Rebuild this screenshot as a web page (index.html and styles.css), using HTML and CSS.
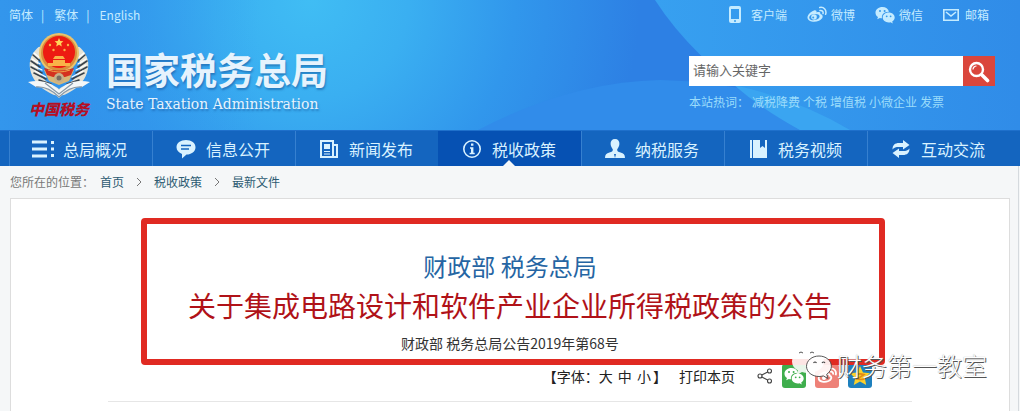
FILE: index.html
```
<!DOCTYPE html>
<html lang="zh-CN">
<head>
    <meta charset="UTF-8">
    <meta name="viewport" content="width=device-width, initial-scale=1">
    <title>国家税务总局</title>
    <link rel="stylesheet" href="styles.css">
</head>
<body>
<header class="header">
    <svg class="header-bg" viewBox="0 0 1020 130" preserveAspectRatio="none" aria-hidden="true">
        <defs>
            <radialGradient id="glow" gradientUnits="userSpaceOnUse" cx="310" cy="0" r="330">
                <stop offset="0" stop-color="#40bdf4"/>
                <stop offset=".3" stop-color="#3aaff1"/>
                <stop offset=".62" stop-color="#3197ec"/>
                <stop offset="1" stop-color="#2d80e4"/>
            </radialGradient>
            <linearGradient id="left" x1="0" x2="1" y1="0" y2="0">
                <stop offset="0" stop-color="#3396ec"/>
                <stop offset="1" stop-color="#3396ec" stop-opacity="0"/>
            </linearGradient>
            <linearGradient id="right" x1="0" x2="1" y1="0" y2="0">
                <stop offset="0" stop-color="#37a0f0"/>
                <stop offset="1" stop-color="#308ce8"/>
            </linearGradient>
        </defs>
        <rect width="1020" height="130" fill="url(#glow)"/>
        <rect width="260" height="130" fill="url(#left)"/>
        <path d="M478 130Q570 82 660 80Q770 82 850 130Z" fill="#318cea"/>
        <path d="M655 0Q700 70 800 130H1020V0Z" fill="url(#right)"/>
        <path d="M734 85Q800 100 850 130H800Q760 108 734 85Z" fill="#3aa5f1"/>
    </svg>
    <div class="top">
        <div class="lang">
            <a href="#">简体</a><i>|</i><a href="#">繁体</a><i>|</i><a href="#">English</a>
        </div>
        <div class="tools">
            <a href="#">
                <svg class="phone" width="12" height="18" viewBox="0 0 12 18"><path fill="currentColor" fill-rule="evenodd" d="M2 0h8a2 2 0 0 1 2 2v13a2 2 0 0 1-2 2H2a2 2 0 0 1-2-2V2a2 2 0 0 1 2-2zm0 3v10h8V3zm3 11.300v1.400h2v-1.400z"/></svg>客户端</a>
            <a href="#">
                <svg width="20" height="18" viewBox="0 0 20 18"><path fill="currentColor" fill-rule="evenodd" d="M7 4.500c1.500-.6 3 .1 2.500 1.900 2-.8 4.400-.6 3.800 1.600 4 1.300 2.600 5-1.300 6.700-4.500 2-11 1-11.500-2.700C.2 9 3.800 5.700 7 4.500zM7.500 8c-3.400.2-5.500 2-5.200 3.900.3 1.700 2.700 2.600 5.500 2.200s5-2 4.800-3.800S10.300 7.800 7.500 8z"/><circle cx="7" cy="11" r="2.800" fill="currentColor"/><circle cx="6.200" cy="11.600" r="1" fill="#37a0ee"/><path d="M13 4.600c2-.5 3.600.9 3 3M12.700 1.500c4.200-.8 7.300 2.600 5.900 6.800" fill="none" stroke="currentColor" stroke-width="1.500" stroke-linecap="round"/></svg>微博</a>
            <a href="#">
                <svg width="20" height="18" viewBox="0 0 20 18"><path fill="currentColor" d="M7.500 1C3.400 1 .5 3.600.5 6.700c0 1.800.9 3.300 2.500 4.300l-.8 2.300 2.700-1.400c.7.2 1.300.3 2.100.3C6.200 8.300 9.800 5.400 14 5.700 13.300 3 10.700 1 7.500 1z"/><path fill="currentColor" d="M13.700 6.600c-3.400 0-6 2.200-6 5s2.600 4.900 6 4.900c.7 0 1.300-.1 1.900-.3l2.200 1.200-.6-1.900c1.500-.9 2.500-2.300 2.500-3.900 0-2.800-2.600-5-6-5z"/><g fill="#3499ea"><circle cx="5" cy="5" r="1"/><circle cx="9.600" cy="5" r="1"/><circle cx="11.700" cy="10.300" r=".9"/><circle cx="15.600" cy="10.300" r=".9"/></g></svg>微信</a>
            <a href="#">
                <svg width="16" height="12" viewBox="0 0 16 12"><path fill="none" stroke="currentColor" stroke-width="1.600" d="M.8.8h14.400v10.400H.8zM3 3l5 4 5-4"/></svg>邮箱</a>
        </div>
    </div>
    <div class="banner">
        <a class="logo" href="#">
            <span class="emblem">
                <svg width="66" height="67" viewBox="0 0 66 67" aria-hidden="true">
                    <g fill="none" stroke-linecap="round">
                        <path d="M14 19C3 30 6 49 29 59M52 19C63 30 60 49 37 59" stroke="#e6e3d6" stroke-width="8"/>
                        <path d="M7 23l7 6M5 29l9 6M5 35l11 6M8 41l12 6M13 48l12 4M59 23l-7 6M61 29l-9 6M61 35l-11 6M58 41l-12 6M53 48l-12 4" stroke="#39424b" stroke-width="1.600"/>
                        <path d="M8 21l6 5M6 27l8 5M6 33l10 5M9 39l11 6M58 21l-6 5M60 27l-8 5M60 33l-10 5M57 39l-11 6" stroke="#fff" stroke-width="1.200"/>
                    </g>
                    <path d="M18 38h30l-5 11-10 4-10-4z" fill="#d8b778"/>
                    <circle cx="33" cy="21" r="20" fill="#ebc36c"/>
                    <circle cx="33" cy="21" r="18" fill="#d98f3d"/>
                    <circle cx="33" cy="20" r="16" fill="#ed1b12"/>
                    <path d="M33 6l1.300 2.900 3.100.3-2.300 2.100.7 3.100-2.800-1.600-2.800 1.600.7-3.100-2.300-2.100 3.100-.3z" fill="#ffd45a"/>
                    <g fill="#f9b348"><circle cx="24" cy="13" r="1.200"/><circle cx="42" cy="13" r="1.200"/><circle cx="27.500" cy="18" r="1.200"/><circle cx="38.500" cy="18" r="1.200"/>
                    <path d="M29 24h8l2 3h-12zM27 28h12v3h5v3H22v-3h5z"/></g>
                    <path d="M18 36q15 5 30 0l-3 7q-12 5-24 0z" fill="#d4301f"/>
                    <path d="M22 38q11 4 22 0" stroke="#f0a64a" fill="none"/>
                    <circle cx="33" cy="46" r="5" fill="#c7b089"/>
                    <circle cx="33" cy="46" r="2.500" fill="#796c61"/>
                    <path d="M2 50q12-3 23 2l8 6 8-6q11-5 23-2l-8 5q-11-1-23 11-12-12-23-11z" fill="#f4f7f8"/>
                    <path d="M10 55q12-1 23 10 11-11 23-10M19 51l14 11 14-11" fill="none" stroke="#8798a7" stroke-width="1.300"/>
                </svg>
                <span class="brush">中国税务</span>
            </span>
            <span class="name">
                <strong>国家税务总局</strong>
                <em>State Taxation Administration</em>
            </span>
        </a>
        <div class="search">
            <form action="#">
                <input type="text" aria-label="关键字" placeholder="请输入关键字">
                <button type="submit" aria-label="搜索">
                    <svg width="22" height="22" viewBox="0 0 22 22"><circle cx="8.500" cy="8.500" r="6.500" fill="none" stroke="#fff" stroke-width="2.400"/><path d="M5 8.500A3.500 3.500 0 0 1 8.500 5" fill="none" stroke="#fff" stroke-width="1.200"/><path d="M14 14l5.500 5.500" stroke="#fff" stroke-width="3.600" stroke-linecap="round"/></svg>
                </button>
            </form>
            <p class="hot"><span>本站热词：</span><a href="#">减税降费</a><a href="#">个税</a><a href="#">增值税</a><a href="#">小微企业</a><a href="#">发票</a></p>
        </div>
    </div>
</header>

<nav class="nav">
    <a href="#"><svg viewBox="0 0 24 20"><path d="M1 3h15M1 10h15M1 17h15" stroke="currentColor" stroke-width="3"/><path d="M20 2h3v3h-3zM20 8.500h3v3h-3zM20 15h3v3h-3z" fill="currentColor"/></svg>总局概况</a>
    <a href="#"><svg viewBox="0 0 24 20"><path d="M12 1c5.500 0 9.500 3 9.500 7.300S17.500 15.500 12.500 15.600L8 19.500v-4.600C4.800 13.800 2.500 11.500 2.500 8.300 2.500 4 6.500 1 12 1z" fill="currentColor"/><path d="M7 6.500h10M7 10h8" stroke="#1465bf" stroke-width="1.400"/></svg>信息公开</a>
    <a href="#"><svg viewBox="0 0 24 20"><path d="M4 2h12v16H4zM16 6h4v12h-5" fill="none" stroke="currentColor" stroke-width="2"/><path d="M7 5h6v5H7zM7 12h6v1H7zM7 14.500h6v1H7z" fill="currentColor"/></svg>新闻发布</a>
    <a href="#" class="on"><svg viewBox="0 0 24 20"><circle cx="12" cy="10" r="8.200" fill="none" stroke="currentColor" stroke-width="1.600"/><path d="M11 4.500h2.400v2.300H11zM10 8.300h3.400v5.500h1.300v1.400H9.600v-1.400H11V9.700h-1z" fill="currentColor"/></svg>税收政策</a>
    <a href="#"><svg viewBox="0 0 24 20"><path d="M12 0c3 0 4.600 2 4.400 5-.2 2.500-1.300 4-2.200 5.200-.3 2 1 2.600 3.400 3.300 3 .9 4.400 2.200 4.400 5.500H2c0-3.300 1.400-4.600 4.400-5.500 2.400-.7 3.700-1.300 3.400-3.300C8.900 9 7.800 7.500 7.600 5 7.400 2 9 0 12 0z" fill="currentColor"/><path d="M11 15l1 4 1-4" fill="#1465bf"/></svg>纳税服务</a>
    <a href="#"><svg viewBox="0 0 24 20"><path d="M4 1h2v18H4zM7 1h7v8l2.500-2L19 9V1h2v18H7z" fill="currentColor"/></svg>税务视频</a>
    <a href="#"><svg viewBox="0 0 24 20"><path d="M3.500 10.500C3.500 6 6 4 10 4h4V1l6.500 5L14 10.500V8h-4c-3 0-5 .5-6.500 2.500zM20.500 9.500c0 4.500-2.500 6.500-6.500 6.500h-4v3l-6.500-5L10 9.500V12h4c3 0 5-.5 6.500-2.500z" fill="currentColor"/></svg>互动交流</a>
</nav>

<div class="page">
    <div class="crumb">
        <span>您所在的位置：</span>
        <a href="#">首页</a>
        <svg width="6" height="10" viewBox="0 0 6 10"><path d="M1 1l4 4-4 4" fill="none" stroke="#777"/></svg>
        <a href="#">税收政策</a>
        <svg width="6" height="10" viewBox="0 0 6 10"><path d="M1 1l4 4-4 4" fill="none" stroke="#777"/></svg>
        <a href="#">最新文件</a>
    </div>

    <main class="content">
        <div class="article">
            <div class="title">
                <h2>财政部 税务总局</h2>
                <h1>关于集成电路设计和软件产业企业所得税政策的公告</h1>
                <p>财政部 税务总局公告2019年第68号</p>
            </div>
            <div class="bar">
                <span class="size">【字体：<a href="#">大</a> <a href="#">中</a> <a href="#">小</a>】</span>
                <a class="print" href="#">打印本页</a>
                <div class="share">
                    <svg width="16" height="16" viewBox="0 0 16 16"><g fill="none" stroke="#444" stroke-width="1.100"><circle cx="3" cy="8" r="2"/><circle cx="12.500" cy="3" r="2"/><circle cx="12.500" cy="13" r="2"/><path d="M4.800 7l5.900-3M4.800 9l5.900 3"/></g></svg>
                    <a class="wx" href="#" aria-label="微信"><svg width="20" height="18" viewBox="0 0 20 18"><path fill="#fff" d="M7.500 1C3.400 1 .5 3.600.5 6.700c0 1.800.9 3.300 2.500 4.300l-.8 2.300 2.700-1.400c.7.2 1.300.3 2.100.3C6.200 8.300 9.800 5.400 14 5.700 13.300 3 10.700 1 7.500 1z"/><path fill="#fff" d="M13.700 6.600c-3.400 0-6 2.200-6 5s2.600 4.900 6 4.900c.7 0 1.300-.1 1.900-.3l2.200 1.200-.6-1.900c1.500-.9 2.500-2.300 2.500-3.900 0-2.800-2.600-5-6-5z"/><g fill="#3fae4d"><circle cx="5" cy="5" r="1"/><circle cx="9.600" cy="5" r="1"/><circle cx="11.700" cy="10.300" r=".9"/><circle cx="15.600" cy="10.300" r=".9"/></g></svg></a>
                    <a class="wb" href="#" aria-label="微博"><svg width="20" height="18" viewBox="0 0 20 18"><path fill="none" stroke="#fff" stroke-width="1.800" d="M7 5.500c2-.8 2.500.3 2 2 2.500-1 4-.6 3.500 1.200 3 1 2 4-1 5.300-4 1.600-9.500.7-9.800-2.400C1.500 9 4.300 6.600 7 5.500zM13 4.600c2-.5 3.600.9 3 3M12.700 1.500c4.200-.8 7.300 2.600 5.900 6.800"/><circle cx="7" cy="11" r="2" fill="#fff"/></svg></a>
                    <a class="qz" href="#" aria-label="QQ空间"><svg width="22" height="22" viewBox="0 0 22 22"><path d="M11 1l3 6.500 7 .8-5.200 4.800 1.400 7L11 16.600l-6.200 3.500 1.400-7L1 8.300l7-.8z" fill="#fcd12a"/><path d="M7 9.500q4-1.200 8 0L8.500 14q3.500 1 7 0" fill="none" stroke="#e58a17" stroke-width="1.600"/></svg></a>
                </div>
            </div>
        </div>
    </main>
</div>

<div class="watermark">
    <svg width="42" height="32" viewBox="0 0 42 32" aria-hidden="true">
        <path d="M17 1C8 1 1 6 1 12.500c0 4 2.300 7 6 9L5.500 26l5.500-3c2 .6 4 .9 6 .9C26 23.900 33 19 33 12.500S26 1 17 1z" fill="#fff" fill-opacity=".88"/>
        <path d="M8 4q2-2 4 0M19 4q2-2 4 0" fill="none" stroke="#555"/>
        <path d="M28 7c-7 0-12.500 4.600-12.500 10.300S21 27.500 28 27.500c1.500 0 3-.2 4.300-.6l4.700 2.600-1.300-4.200c2.800-1.800 4.700-4.800 4.700-8C40.400 11.600 35 7 28 7z" fill="#fff" fill-opacity=".9" stroke="#444" stroke-width=".9"/>
        <path d="M22.500 14q1.500-2 3 0M31 14q1.500-2 3 0" fill="none" stroke="#444" stroke-width="1.200"/>
    </svg>
    <span>财务第一教室</span>
</div>
</body>
</html>
```
FILE: styles.css
```
*{
    box-sizing: border-box;
}
body{
    margin:0;
    min-height:100vh;
    background:#f5f7f8;
    font:12px/18px "Noto Sans CJK SC", sans-serif;
    color:#777;
    position: relative;
    display: flex;
    flex-direction: column;
}
a{
    color:inherit;
    text-decoration: none;
}
svg{
    display:block;
    flex:none;
}
h1,h2,p{
    margin:0;
    font-weight: 400;
}

/*头部*/
.header{
    position: relative;
    height:130px;
    color:#c4ebff;
}
.header-bg{
    position: absolute;
    left:0; top:0;
    width:100%; height:100%;
}
.top{
    position: relative;
    display: flex;
    justify-content: space-between;
    padding:6px 31px 0 9px;
}
.lang i{
    font-style: normal;
    margin:0 10px 0 8px;
}
.tools{
    display: flex;
    gap:20px;
}
.tools a{
    display: flex;
    align-items: center;
    gap:4px;
}
.tools a:last-child{
    gap:6px;
}
.tools .phone{
    margin-right:6px;
}
.banner{
    position: relative;
    display: flex;
    justify-content: space-between;
    align-items: flex-start;
    padding:8px 25px 0 26px;
}
.logo{
    display: flex;
    gap:14px;
}
.emblem{
    width:66px;
}
.brush{
    display: block;
    font-size:15px;
    line-height:20px;
    font-weight: 900;
    font-style: italic;
    color:#b50f23;
    text-align: center;
}
.name{
    padding-top:10px;
    color:#e6f3fd;
    text-shadow: 1px 2px 2px rgba(20,80,150,.5);
}
.name strong,.name em{
    display: block;
}
.name strong{
    font-size:37px;
    line-height:54px;
}
.name em{
    font:normal 14px/16px "DejaVu Serif", serif;
}
.search{
    width:306px;
    padding-top:24px;
}
.search form{
    display: flex;
    height:30px;
}
.search input{
    flex:1;
    min-width:0;
    border:0;
    padding:0 4px 3px;
    background:#fff;
    font:13px "Noto Sans CJK SC", sans-serif;
}
.search input::placeholder{
    color:#666;
    opacity:1;
}
.search button{
    width:32px;
    border:0;
    padding:5px;
    background:#da463c;
}
.hot{
    display: flex;
    gap:3px;
    padding-top:7px;
    color:#9bdcfb;
}

/*导航*/
.nav{
    display: flex;
    height:36px;
    padding:0 10px 0 9px;
    background:#1465bf;
    border-top:1px solid #1f70cb;
}
.nav a{
    flex:1;
    position: relative;
    display: flex;
    align-items: center;
    gap:8px;
    padding-left:21px;
    border-left:1px solid #3680d0;
    font-size:16px;
    color:#d9f2ff;
}
.nav svg{
    width:24px;
    height:20px;
}
.nav .on{
    background:#0651b3;
    border-color:#0651b3;
}
.nav .on::after{
    content:"";
    position: absolute;
    left:50%;
    bottom:0;
    margin-left:-7px;
    border:6px solid transparent;
    border-top:0;
    border-bottom-color:#f5f7f8;
}

/*当前位置*/
.page{
    flex:1;
    display: flex;
    flex-direction: column;
    margin-right:1px;
    border-right:1px solid #d5dade;
}
.crumb{
    display: flex;
    align-items: center;
    gap:12px;
    height:32px;
    padding:0 10px;
}
.crumb span{
    margin-right:-6px;
}
.crumb a{
    color:#2d5b72;
}

/*正文*/
.content{
    flex:1;
    margin:0 8px 0 10px;
    background:#fff;
    border:1px solid #ddd;
    border-bottom:0;
}
.article{
    max-width:804px;
    margin:0 auto;
    border-bottom:1px solid #e6e6e6;
}
.title{
    position: relative;
    padding-top:49px;
    text-align: center;
}
/*红框*/
.title::before{
    content:"";
    position: absolute;
    inset:19px 27px -7px 33px;
    border:6px solid #e02a22;
    border-radius:4px;
}
.title h2{
    font-size:24px;
    line-height:36px;
    color:#2565a3;
}
.title h1{
    font-size:28px;
    line-height:42px;
    color:#b01218;
}
.title p{
    font-size:14px;
    line-height:30px;
    padding-top:2px;
    color:#333;
}
.bar{
    display: flex;
    justify-content: flex-end;
    align-items: center;
    gap:12px;
    padding:6px 40px 13px 0;
    font-size:14px;
    line-height:24px;
    color:#222;
}
.size a{
    margin-right:2px;
}
.share{
    display: flex;
    align-items: center;
    gap:9px;
    margin-left:10px;
}
.share a{
    width:24px;
    height:24px;
    display: flex;
    align-items: center;
    justify-content: center;
    border-radius:3px;
}
.wx{
    background:#3fae4d;
}
.wb{
    background:#ee8178;
}
.qz{
    background:#1e80bd;
}

/*水印*/
.watermark{
    position: absolute;
    right:33px;
    bottom:28px;
    display: flex;
    align-items: center;
    gap:4px;
    font-size:25px;
    line-height:36px;
    font-weight: 300;
    color:#fff;
    text-shadow: 1px 1px 0 #555, 0 0 1px #999;
}
```
